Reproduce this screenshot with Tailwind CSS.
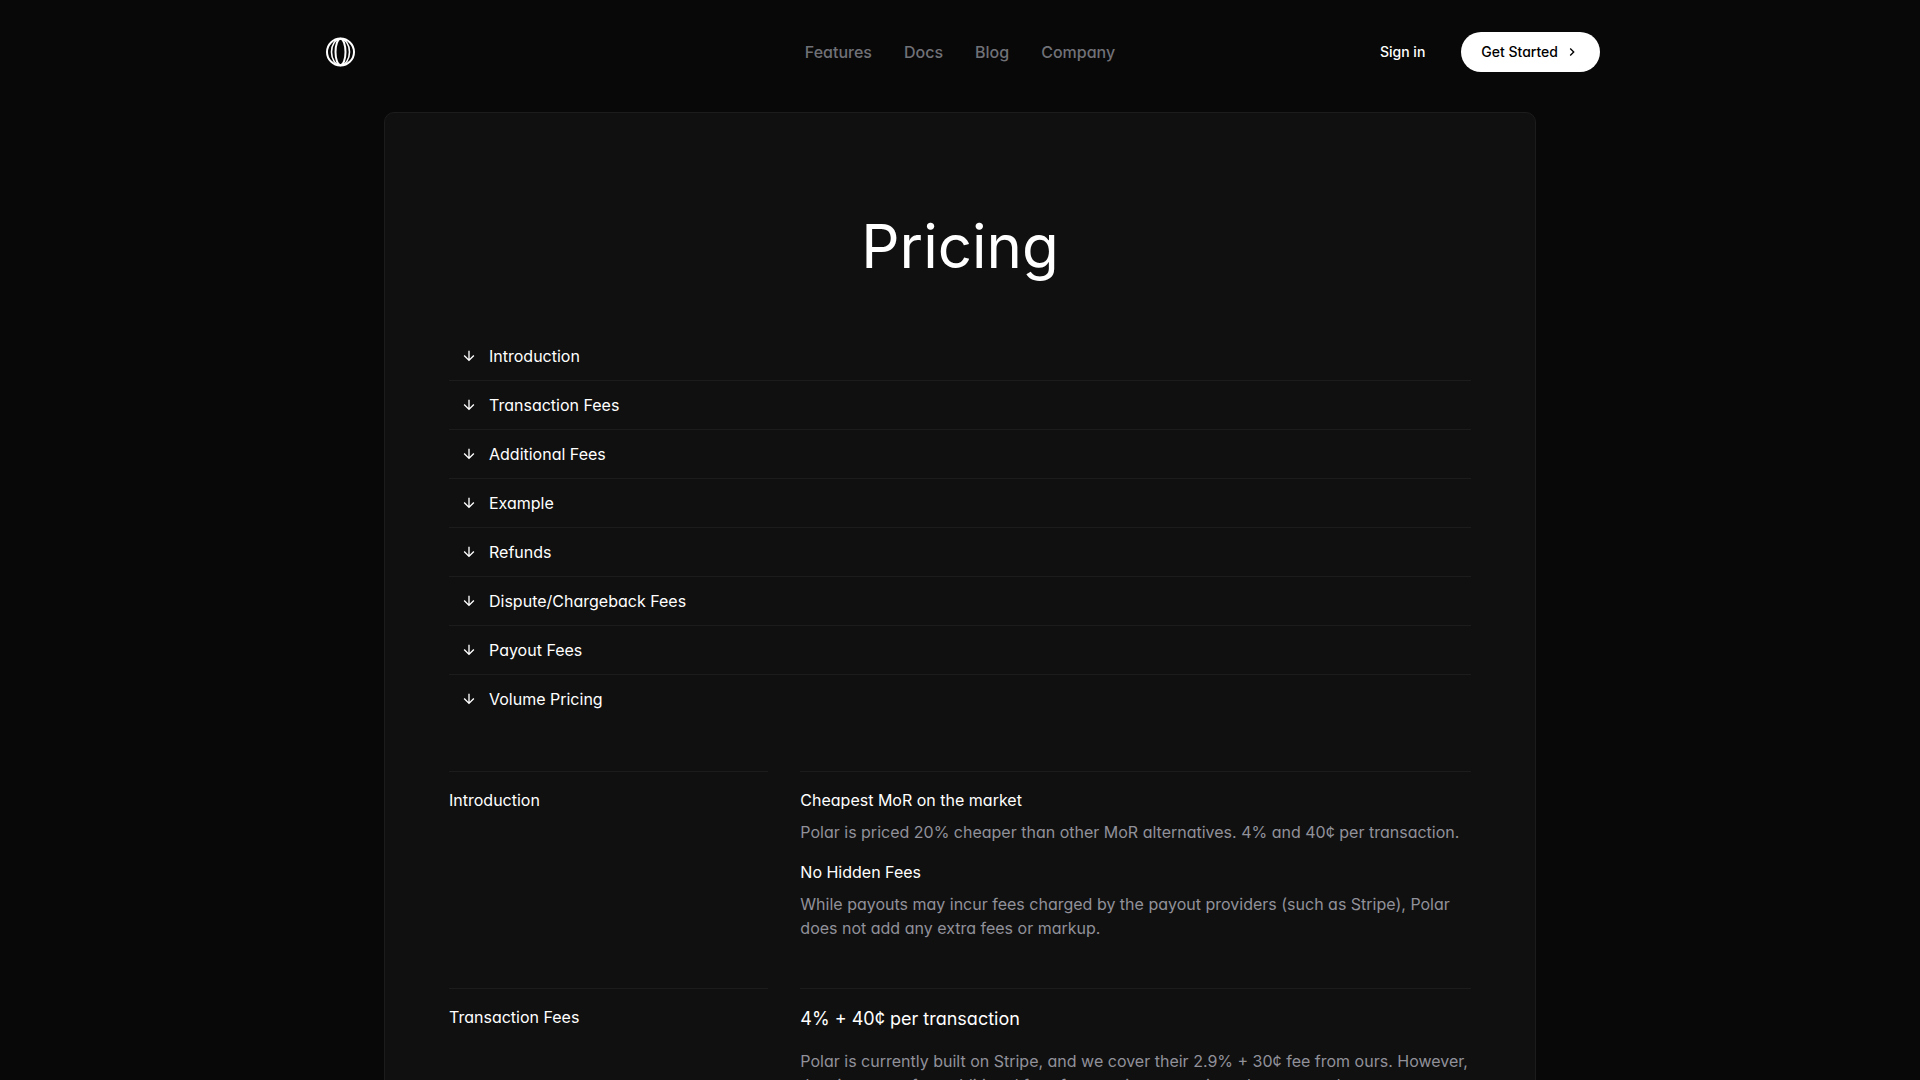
<!DOCTYPE html>
<html lang="en">
  <head>
    <meta charset="UTF-8" />
    <meta name="viewport" content="width=device-width, initial-scale=1.0" />
    <script src="https://cdn.jsdelivr.net/npm/@tailwindcss/browser@4"></script>
    <title>Pricing | Polar</title>
  </head>
  <body
    class="h-screen overflow-hidden bg-[#080808] font-['Inter',sans-serif] text-base text-white [font-feature-settings:'cv11']"
  >
    <header
      class="mx-auto grid w-full max-w-7xl grid-cols-3 items-center pt-8 pb-10"
    >
      <a href="#" aria-label="Polar" class="w-fit pl-1">
        <svg class="size-8" viewBox="0 0 32 32" fill="none" stroke="currentColor">
          <circle cx="16.5" cy="16" r="13.5" stroke-width="2" />
          <ellipse cx="16.5" cy="16" rx="5" ry="13.3" stroke-width="2" />
          <ellipse cx="16.5" cy="16" rx="9" ry="13.2" stroke-width="1.6" />
        </svg>
      </a>
      <nav class="flex items-center justify-center gap-8 font-medium text-[#707177]">
        <a href="#" class="hover:text-white">Features</a>
        <a href="#" class="hover:text-white">Docs</a>
        <a href="#" class="hover:text-white">Blog</a>
        <a href="#" class="hover:text-white">Company</a>
      </nav>
      <div class="flex items-center justify-end gap-4 text-sm font-medium">
        <button class="px-5">Sign in</button>
        <button
          class="flex h-10 items-center gap-1.5 rounded-full bg-white px-5 text-black"
        >
          Get Started
          <svg class="size-4" viewBox="0 0 24 24" fill="currentColor">
            <path d="M10 6 8.59 7.41 13.17 12l-4.58 4.59L10 18l6-6z" />
          </svg>
        </button>
      </div>
    </header>

    <main
      class="mx-auto w-full max-w-6xl rounded-[10px] border border-[#1c1c1d] bg-[#101010] px-16 pt-[103px]"
    >
      <h1 class="text-center text-6xl leading-none">Pricing</h1>

      <ul class="mt-14 divide-y divide-[#1c1c1d]">
        <li>
          <a href="#introduction" class="flex items-center gap-3 px-3 py-3">
            <svg class="size-4" viewBox="0 0 24 24" fill="currentColor">
              <path d="m20 12-1.41-1.41L13 16.17V4h-2v12.17l-5.58-5.59L4 12l8 8z" />
            </svg>
            Introduction
          </a>
        </li>
        <li>
          <a href="#transaction-fees" class="flex items-center gap-3 px-3 py-3">
            <svg class="size-4" viewBox="0 0 24 24" fill="currentColor">
              <path d="m20 12-1.41-1.41L13 16.17V4h-2v12.17l-5.58-5.59L4 12l8 8z" />
            </svg>
            Transaction Fees
          </a>
        </li>
        <li>
          <a href="#additional-fees" class="flex items-center gap-3 px-3 py-3">
            <svg class="size-4" viewBox="0 0 24 24" fill="currentColor">
              <path d="m20 12-1.41-1.41L13 16.17V4h-2v12.17l-5.58-5.59L4 12l8 8z" />
            </svg>
            Additional Fees
          </a>
        </li>
        <li>
          <a href="#example" class="flex items-center gap-3 px-3 py-3">
            <svg class="size-4" viewBox="0 0 24 24" fill="currentColor">
              <path d="m20 12-1.41-1.41L13 16.17V4h-2v12.17l-5.58-5.59L4 12l8 8z" />
            </svg>
            Example
          </a>
        </li>
        <li>
          <a href="#refunds" class="flex items-center gap-3 px-3 py-3">
            <svg class="size-4" viewBox="0 0 24 24" fill="currentColor">
              <path d="m20 12-1.41-1.41L13 16.17V4h-2v12.17l-5.58-5.59L4 12l8 8z" />
            </svg>
            Refunds
          </a>
        </li>
        <li>
          <a href="#dispute-fees" class="flex items-center gap-3 px-3 py-3">
            <svg class="size-4" viewBox="0 0 24 24" fill="currentColor">
              <path d="m20 12-1.41-1.41L13 16.17V4h-2v12.17l-5.58-5.59L4 12l8 8z" />
            </svg>
            Dispute/Chargeback Fees
          </a>
        </li>
        <li>
          <a href="#payout-fees" class="flex items-center gap-3 px-3 py-3">
            <svg class="size-4" viewBox="0 0 24 24" fill="currentColor">
              <path d="m20 12-1.41-1.41L13 16.17V4h-2v12.17l-5.58-5.59L4 12l8 8z" />
            </svg>
            Payout Fees
          </a>
        </li>
        <li>
          <a href="#volume-pricing" class="flex items-center gap-3 px-3 py-3">
            <svg class="size-4" viewBox="0 0 24 24" fill="currentColor">
              <path d="m20 12-1.41-1.41L13 16.17V4h-2v12.17l-5.58-5.59L4 12l8 8z" />
            </svg>
            Volume Pricing
          </a>
        </li>
      </ul>

      <section id="introduction" class="mt-12 grid grid-cols-3 gap-8">
        <h2 class="border-t border-[#1c1c1d] pt-4">Introduction</h2>
        <div class="col-span-2 flex flex-col gap-4 border-t border-[#1c1c1d] pt-4">
          <div class="flex flex-col gap-2">
            <h3>Cheapest MoR on the market</h3>
            <p class="text-[#91919a]">
              Polar is priced 20% cheaper than other MoR alternatives. 4% and 40¢ per transaction.
            </p>
          </div>
          <div class="flex flex-col gap-2">
            <h3>No Hidden Fees</h3>
            <p class="text-[#91919a]">
              While payouts may incur fees charged by the payout providers (such as Stripe), Polar does not add any extra fees or markup.
            </p>
          </div>
        </div>
      </section>

      <section id="transaction-fees" class="mt-12 grid grid-cols-3 gap-8">
        <h2 class="border-t border-[#1c1c1d] pt-4">Transaction Fees</h2>
        <div class="col-span-2 flex flex-col gap-4 border-t border-[#1c1c1d] pt-4">
          <h3 class="text-lg">4% + 40¢ per transaction</h3>
          <p class="text-[#91919a]">
            Polar is currently built on Stripe, and we cover their 2.9% + 30¢ fee from ours. However, they impose a few additional fees for certain transactions that we need to pass on.
          </p>
        </div>
      </section>
    </main>
  </body>
</html>
